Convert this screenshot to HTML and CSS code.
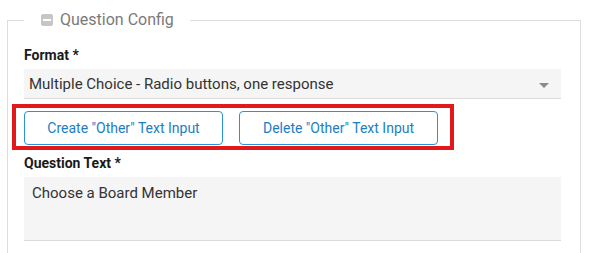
FILE: index.html
```html
<!DOCTYPE html>
<html>
<head>
<meta charset="utf-8">
<link rel="stylesheet" href="styles.css">
</head>
<body>
<fieldset class="config">
  <legend class="config-legend">
    <span class="collapse-icon"><span class="collapse-bar"></span></span>
    <span class="legend-text">Question Config</span>
  </legend>
  <label class="field-label">Format *</label>
  <div class="select">
    <span class="select-value">Multiple Choice - Radio buttons, one response</span>
    <span class="caret"></span>
  </div>
  <div class="highlight">
    <button class="btn">Create "Other" Text Input</button>
    <button class="btn">Delete "Other" Text Input</button>
  </div>
  <label class="field-label label-gap">Question Text *</label>
  <div class="textarea">Choose a Board Member</div>
</fieldset>
</body>
</html>
```

FILE: styles.css
```css
html, body {
  margin: 0;
  padding: 0;
  background: #fff;
  font-family: Roboto, "Liberation Sans", sans-serif;
}

body {
  padding: 10px 12px 0 7px;
}

.config {
  margin: 0;
  width: 574px;
  box-sizing: border-box;
  border: 1px solid #dddddd;
  border-bottom: none;
  padding: 16px 18px 20px 16px;
  min-width: 0;
}

.config-legend {
  display: flex;
  align-items: center;
  padding: 0 16px 0 17px;
  height: 20px;
  margin: 0;
}

.collapse-icon {
  width: 12px;
  height: 12px;
  background: #c6c6c6;
  border-radius: 2px;
  display: flex;
  align-items: center;
  justify-content: center;
  margin-right: 7px;
}

.collapse-bar {
  width: 8px;
  height: 2px;
  background: #fff;
}

.legend-text {
  font-size: 16px;
  color: #7a7a7a;
  line-height: 20px;
}

.field-label {
  display: block;
  font-size: 14px;
  font-weight: bold;
  color: #1a1a1a;
  line-height: 18px;
  margin-bottom: 5px;
}

.label-gap {
  margin-top: 4px;
}

.select {
  height: 30px;
  box-sizing: border-box;
  background: #f5f5f5;
  border-bottom: 1px solid #dcdcdc;
  display: flex;
  align-items: center;
  justify-content: space-between;
  padding: 0 12px 0 5px;
  width: 537px;
}

.select-value {
  font-size: 15px;
  color: #333;
}

.caret {
  width: 0;
  height: 0;
  border-left: 5px solid transparent;
  border-right: 5px solid transparent;
  border-top: 5px solid #8a8a8a;
  margin-top: 3px;
}

.highlight {
  margin: 5px 0 0 -12px;
  width: 442px;
  box-sizing: border-box;
  border: 4px solid #e2191b;
  padding: 3px 11px 1px 8px;
  display: flex;
  gap: 16px;
}

.btn {
  width: 199px;
  height: 34px;
  box-sizing: border-box;
  background: #fff;
  border: 1px solid #2993d8;
  border-radius: 4px;
  color: #1b7ec4;
  font-family: Roboto, "Liberation Sans", sans-serif;
  font-size: 14px;
  padding: 0;
}

.textarea {
  width: 537px;
  height: 64px;
  box-sizing: border-box;
  background: #f5f5f5;
  border-bottom: 1px solid #dcdcdc;
  padding: 7px 8px;
  font-size: 15px;
  line-height: 18px;
  color: #333;
}
```
